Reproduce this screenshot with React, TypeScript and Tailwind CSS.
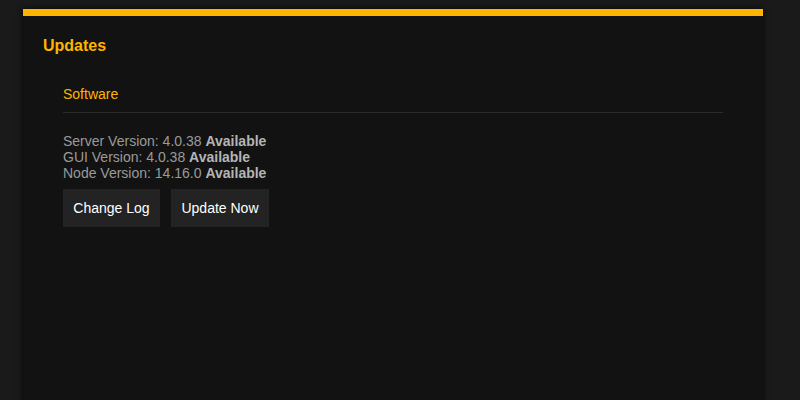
import React from "react";

export default function App() {
  return (
    <div className="w-[800px] h-[400px] bg-[#1a1a1a] overflow-hidden pt-[9px] pl-[23px]" style={{ fontFamily: '"Liberation Sans", Arial, sans-serif' }}>
      <div className="w-[740px] h-[400px] bg-[#121212] border-t-[7px] border-[#ffb400] shadow-[0_0_6px_rgba(0,0,0,0.8)] px-[20px] pt-[20px]">
        <h2 className="text-[16px] leading-[20px] font-bold text-[#ffb400]">Updates</h2>
        <div className="pl-[20px] pr-[20px] pt-[29px]">
          <div className="text-[14px] leading-[18px] text-[#ffb400] pb-[9px] border-b border-[#2a2a2a]">Software</div>
          <div className="pt-[20px] text-[14px] leading-[16px] text-[#9a9a9a]">
            <div>Server Version: 4.0.38 <b className="text-[#b5b5b5]">Available</b></div>
            <div>GUI Version: 4.0.38 <b className="text-[#b5b5b5]">Available</b></div>
            <div>Node Version: 14.16.0 <b className="text-[#b5b5b5]">Available</b></div>
          </div>
          <div className="flex gap-[11px] pt-[8px]">
            <button className="w-[97px] h-[38px] bg-[#232323] text-white text-[14px]">Change Log</button>
            <button className="w-[98px] h-[38px] bg-[#232323] text-white text-[14px]">Update Now</button>
          </div>
        </div>
      </div>
    </div>
  );
}
